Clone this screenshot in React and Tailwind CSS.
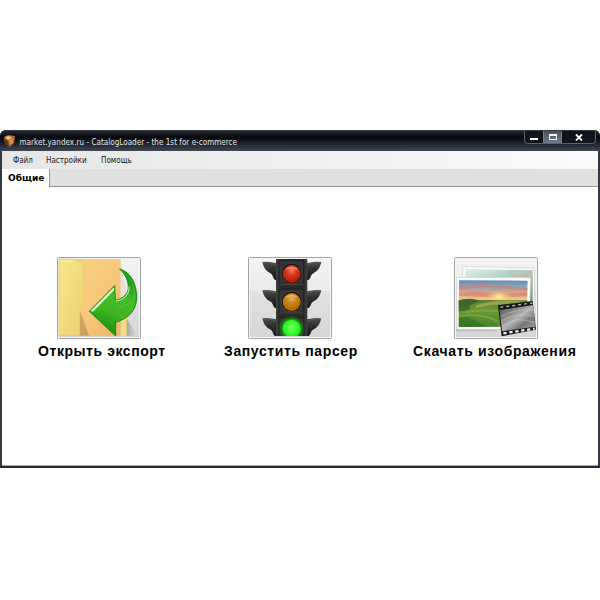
import React from "react";

function Frame({ children, label }) {
  return (
    <svg className="block h-[82px] w-[84px]" viewBox="22 21 252 246" role="img" aria-label={label}>
      <defs>
        <linearGradient id="face" x1="0" y1="0" x2="0" y2="1">
          <stop offset="0" stopColor="#f3f3f3" />
          <stop offset=".4" stopColor="#ebebeb" />
          <stop offset=".42" stopColor="#e2e2e2" />
          <stop offset="1" stopColor="#d6d6d6" />
        </linearGradient>
      </defs>
      <rect x="23.5" y="22.5" width="249" height="243" rx="3" fill="url(#face)" stroke="#a2a2a2" strokeWidth="3" />
      <rect x="26.5" y="25.5" width="243" height="237" fill="none" stroke="#f6f6f6" strokeWidth="3" />
      {children}
    </svg>
  );
}

function ExportIcon() {
  return (
    <Frame label="Экспорт">
      <defs>
        <linearGradient id="back" x1="0" y1="0" x2="1" y2="1">
          <stop offset="0" stopColor="#f7d084" />
          <stop offset=".5" stopColor="#f7c779" />
          <stop offset="1" stopColor="#e7b364" />
        </linearGradient>
        <linearGradient id="front" x1="0" y1="0" x2="1" y2="1">
          <stop offset="0" stopColor="#f7e789" />
          <stop offset="1" stopColor="#eccf70" />
        </linearGradient>
        <linearGradient id="arrow" x1=".8" y1="0" x2=".5" y2="1">
          <stop offset="0" stopColor="#0f8a15" />
          <stop offset=".45" stopColor="#48bd2a" />
          <stop offset=".7" stopColor="#3fb321" />
          <stop offset="1" stopColor="#128f10" />
        </linearGradient>
        <linearGradient id="shade" x1="0" y1="0" x2="1" y2="0">
          <stop offset="0" stopColor="#777" stopOpacity=".7" />
          <stop offset="1" stopColor="#999" stopOpacity="0" />
        </linearGradient>
      </defs>
      <path d="M228 200 L262 257 H225Z" fill="url(#shade)" />
      <path d="M75 27 H208 Q212 28 213 34 L231 160 V257 H75Z" fill="url(#back)" />
      <path d="M213 34 V257 H231 V205Z" fill="#f3dc91" />
      <path d="M213 34 L231 160 V205 L213 180Z" fill="#e2e2df" />
      <path d="M92 185 L118 257 H90Z" fill="#b99155" opacity=".7" />
      <path d="M28 27 H70 L100 35 Q103 37 103 43 V158 Q102 165 96 170 Q90 176 90 184 V257 H28Z" fill="url(#front)" stroke="#e4c46b" strokeWidth="2" />
      <path d="M32 32 H68 V36 L32 35Z M37 38 L36 252" fill="#fff6af" stroke="#fff4a0" strokeWidth="1.5" opacity=".7" />
      <path d="M210 57 C243 66 261 101 261 142 C260 186 232 207 198 217 V258 L119 184 L195 107 L197 151 C224 145 236 130 236 112 C236 90 226 72 210 57Z" fill="url(#arrow)" stroke="#168c16" strokeWidth="3" strokeLinejoin="round" />
      <path d="M123 182 L193 112 L194 120 L130 185Z" fill="#e5ffdb" />
      <path d="M218 64 C248 82 257 115 253 142 C247 159 232 167 207 172" fill="none" stroke="#65ce43" strokeWidth="3" opacity=".5" />
      <path d="M198 153 C226 149 239 132 238 110" fill="none" stroke="#c8f5b7" strokeWidth="3" />
    </Frame>
  );
}

function Visors({ y }) {
  return (
    <g transform={`translate(0 ${y})`}>
      <path d="M65 36 L82 35 L107 39 V90 Q100 90 97 80 Q95 73 88 69 Q70 61 65 36Z" fill="url(#visor)" />
      <path d="M242 36 L225 35 L199 39 V90 Q207 90 210 80 Q212 73 219 69 Q237 61 242 36Z" fill="url(#visor)" />
      <path d="M68 37 Q90 36 107 44 M239 37 Q218 36 200 44" fill="none" stroke="#656565" strokeWidth="2" />
    </g>
  );
}

function TrafficIcon() {
  return (
    <Frame label="Парсер">
      <defs>
        <linearGradient id="visor" x1="0" y1="0" x2="0" y2="1">
          <stop offset="0" stopColor="#505050" />
          <stop offset=".4" stopColor="#303030" />
          <stop offset="1" stopColor="#171717" />
        </linearGradient>
        <linearGradient id="body" x1="0" y1="0" x2="1" y2="0">
          <stop offset="0" stopColor="#434343" />
          <stop offset=".12" stopColor="#292929" />
          <stop offset=".88" stopColor="#292929" />
          <stop offset="1" stopColor="#434343" />
        </linearGradient>
        <radialGradient id="red" cx=".5" cy=".3" r=".7">
          <stop offset="0" stopColor="#f58468" />
          <stop offset=".35" stopColor="#db3b22" />
          <stop offset="1" stopColor="#a91505" />
        </radialGradient>
        <radialGradient id="amber" cx=".5" cy=".3" r=".7">
          <stop offset="0" stopColor="#e9b660" />
          <stop offset=".4" stopColor="#cd8518" />
          <stop offset="1" stopColor="#ac6500" />
        </radialGradient>
        <radialGradient id="green" cx=".5" cy=".45" r=".6">
          <stop offset="0" stopColor="#7dff62" />
          <stop offset=".6" stopColor="#2dfc25" />
          <stop offset="1" stopColor="#14d70e" />
        </radialGradient>
        <radialGradient id="glow">
          <stop offset=".55" stopColor="#1cc714" stopOpacity=".95" />
          <stop offset="1" stopColor="#115910" stopOpacity="0" />
        </radialGradient>
        <clipPath id="lampclip"><rect x="25" y="25" width="246" height="233" /></clipPath>
      </defs>
      <g clipPath="url(#lampclip)">
        <Visors y={0} />
        <Visors y={85} />
        <Visors y={169} />
        <rect x="106" y="27" width="94" height="233" fill="url(#body)" />
        <path d="M115 31 H189 V103 H115Z M115 118 H189 V188 H115Z M115 203 H189 V262 H115Z" fill="#343434" stroke="#1b1b1b" strokeWidth="2" />
        <path d="M116 104 H188 M116 189 H188" stroke="#606060" strokeWidth="2" />
        <circle cx="153" cy="71" r="31" fill="#111" stroke="#505050" strokeWidth="2" />
        <circle cx="153" cy="72" r="27" fill="url(#red)" />
        <circle cx="153" cy="155" r="31" fill="#111" stroke="#505050" strokeWidth="2" />
        <circle cx="153" cy="156" r="27" fill="url(#amber)" />
        <circle cx="153" cy="236" r="43" fill="url(#glow)" />
        <circle cx="153" cy="236" r="27" fill="url(#green)" />
        <path d="M137 58 Q153 47 169 58 M137 142 Q153 131 169 142" fill="none" stroke="#ffd7b2" strokeWidth="4" opacity=".45" />
      </g>
    </Frame>
  );
}

function PicturesIcon() {
  return (
    <Frame label="Изображения">
      <defs>
        <linearGradient id="sky" x1="0" y1="0" x2="0" y2="1">
          <stop offset="0" stopColor="#608bb8" />
          <stop offset=".3" stopColor="#8fa4b6" />
          <stop offset=".6" stopColor="#d9a08a" />
          <stop offset="1" stopColor="#f5ce87" />
        </linearGradient>
        <linearGradient id="field" x1="0" y1="0" x2="0" y2="1">
          <stop offset="0" stopColor="#56713a" />
          <stop offset=".4" stopColor="#6b9c33" />
          <stop offset="1" stopColor="#43832a" />
        </linearGradient>
        <linearGradient id="rear" x1="0" y1="0" x2="1" y2="1">
          <stop offset="0" stopColor="#dceee9" />
          <stop offset=".5" stopColor="#a9c9b9" />
          <stop offset="1" stopColor="#6b9b68" />
        </linearGradient>
        <linearGradient id="still" x1="0" y1="0" x2="1" y2="1">
          <stop offset="0" stopColor="#505050" />
          <stop offset=".3" stopColor="#858585" />
          <stop offset=".5" stopColor="#b4b4b4" />
          <stop offset=".7" stopColor="#777" />
          <stop offset="1" stopColor="#aaa" />
        </linearGradient>
        <radialGradient id="sun">
          <stop offset="0" stopColor="#fff5a6" />
          <stop offset="1" stopColor="#ffcd57" stopOpacity="0" />
        </radialGradient>
      </defs>
      <path d="M28 237 H150 V244 H28Z" fill="#aaa" opacity=".6" />
      <path d="M48 49 L263 54 V170 H48Z" fill="#f9f9f9" stroke="#d0d0d0" strokeWidth="2" />
      <path d="M56 57 L258 61 V158 H56Z" fill="url(#rear)" />
      <path d="M180 65 Q215 78 258 70 V105 Q220 88 180 65Z" fill="#d9b9a5" opacity=".5" />
      <path d="M30 82 L252 83 L247 239 L30 238Z" fill="#fcfcfc" stroke="#ccc" strokeWidth="2" />
      <path d="M37 91 L243 92 L241 152 H36Z" fill="url(#sky)" />
      <path d="M37 109 L100 102 L243 114 V121 L120 112 L37 119Z M37 131 L91 125 L160 132 L242 128 V139 L150 142 L37 138Z" fill="#d87665" opacity=".55" />
      <ellipse cx="157" cy="140" rx="42" ry="19" fill="url(#sun)" />
      <path d="M36 151 Q65 142 94 150 L242 151 L239 230 L36 231Z" fill="url(#field)" />
      <path d="M36 152 Q67 143 98 153 L66 168 Q83 181 36 184Z" fill="#345a2b" opacity=".7" />
      <path d="M88 165 Q155 145 235 155 L180 162 Q131 163 88 175Z" fill="#99a446" />
      <path d="M37 198 Q105 188 159 214 M55 187 Q107 178 153 184 M104 199 Q140 201 162 229" fill="none" stroke="#8cb74e" strokeWidth="3" opacity=".7" />
      <path d="M37 204 Q65 196 87 212 L122 230 H37Z" fill="#246125" opacity=".45" />
      <path d="M154 166 L258 153 L268 239 L165 259Z" fill="#181818" />
      <path d="M159 180 L260 165 L266 230 L166 244Z" fill="url(#still)" />
      <path d="M162 200 Q203 175 261 181 M164 213 Q207 185 263 199 M167 229 Q211 196 263 218" fill="none" stroke="#ddd" strokeWidth="3" opacity=".4" />
      <path d="M161 172 L257 159" fill="none" stroke="#bbb" strokeWidth="4" strokeDasharray="9 9" />
      <path d="M170 250 L264 236" fill="none" stroke="#eee" strokeWidth="7" strokeDasharray="10 8" />
    </Frame>
  );
}

function Action({ icon, children, className, iconClass }) {
  return (
    <div className={"flex flex-col " + className}>
      <div className={iconClass}>{icon}</div>
      <button className="mt-[3px] h-[18px] whitespace-nowrap text-left text-[14px] leading-[18px] font-bold text-black">
        {children}
      </button>
    </div>
  );
}

export default function App() {
  return (
    <main className="h-[600px] w-[600px] overflow-hidden bg-white pt-[130px] font-['Liberation_Sans',sans-serif]">
      <section className="flex h-[338px] w-[600px] flex-col overflow-hidden rounded-t-[6px] border-b-[2px] border-[#282b32] bg-[#343841]">
        <header className="flex h-[21px] shrink-0 items-start border-t border-[#343943] bg-linear-to-b from-[#25282e] via-[#07080d] via-30% to-[#404653] pl-[4px] pr-[4px]">
          <svg className="mt-[4px] h-[12px] w-[11px]" viewBox="0 0 11 12">
            <path d="M0 2 L4 0 L11 1 L10 8 L6 12 L1 8Z" fill="#a86432" />
            <path d="M1 2 L5 1 L8 3 L4 5Z" fill="#f2c17a" />
            <path d="M5 5 L10 3 L9 8 L6 10Z" fill="#d78a42" />
            <path d="M1 4 L4 6 L5 11 L1 8Z" fill="#643318" />
          </svg>
          <h1 className="ml-[4.5px] mt-[5px] whitespace-nowrap font-['DejaVu_Sans_Condensed','DejaVu_Sans',sans-serif] text-[8px] leading-[14px] font-normal tracking-[.04px] text-[#e5e5e8]">
            market.yandex.ru - CatalogLoader - the 1st for e-commerce
          </h1>
          <div className="ml-auto flex h-[13px] w-[72px] overflow-hidden rounded-b-[4px] border border-t-0 border-[#5b606b] bg-[#11141b]">
            <button className="flex w-[18px] items-end justify-center pb-[3px]" aria-label="Свернуть"><span className="h-[2px] w-[8px] bg-white" /></button>
            <button className="flex w-[19px] items-center justify-center border-x border-[#777d88] bg-linear-to-b from-[#4b505a] to-[#727987]" aria-label="Развернуть"><span className="h-[6px] w-[8px] border border-t-2 border-[#f4f4f4]" /></button>
            <button className="flex flex-1 items-center justify-center" aria-label="Закрыть"><svg className="h-[7px] w-[8px]" viewBox="0 0 8 7"><path d="M1 .5 L7 6.5 M7 .5 L1 6.5" stroke="#fff" strokeWidth="1.8" /></svg></button>
          </div>
        </header>
        <div className="ml-[2px] mr-[2px] flex min-h-0 flex-1 flex-col border-b border-[#aaa9b2] bg-white">
          <nav className="flex h-[18px] shrink-0 items-center bg-linear-to-r from-[#e6e6e6] to-[#fafafa] pl-[11px] pt-[2px] font-['DejaVu_Sans_Condensed','DejaVu_Sans',sans-serif] text-[8px] leading-[16px] text-[#161616]">
            <span className="w-[33px] whitespace-nowrap">Файл</span>
            <span className="w-[55px] whitespace-nowrap">Настройки</span>
            <span className="whitespace-nowrap">Помощь</span>
          </nav>
          <div className="flex h-[18px] shrink-0 items-stretch bg-[#e0e0e0]">
            <div className="w-[48px] border-r border-[#999] bg-white pl-[6px] font-['DejaVu_Sans',sans-serif] text-[9px] leading-[18px] font-bold text-black">Общие</div>
            <div className="flex-1 border-b border-[#969696]" />
          </div>
          <div className="flex min-h-0 flex-1 pt-[70px]">
            <Action className="ml-[36px] w-[150px] tracking-[.57px]" iconClass="ml-[19px]" icon={<ExportIcon />}>Открыть экспорт</Action>
            <Action className="ml-[36px] w-[150px] tracking-[.62px]" iconClass="ml-[24px]" icon={<TrafficIcon />}>Запустить парсер</Action>
            <Action className="ml-[39px] w-[170px] tracking-[.64px]" iconClass="ml-[40.5px]" icon={<PicturesIcon />}>Скачать изображения</Action>
          </div>
        </div>
      </section>
    </main>
  );
}
